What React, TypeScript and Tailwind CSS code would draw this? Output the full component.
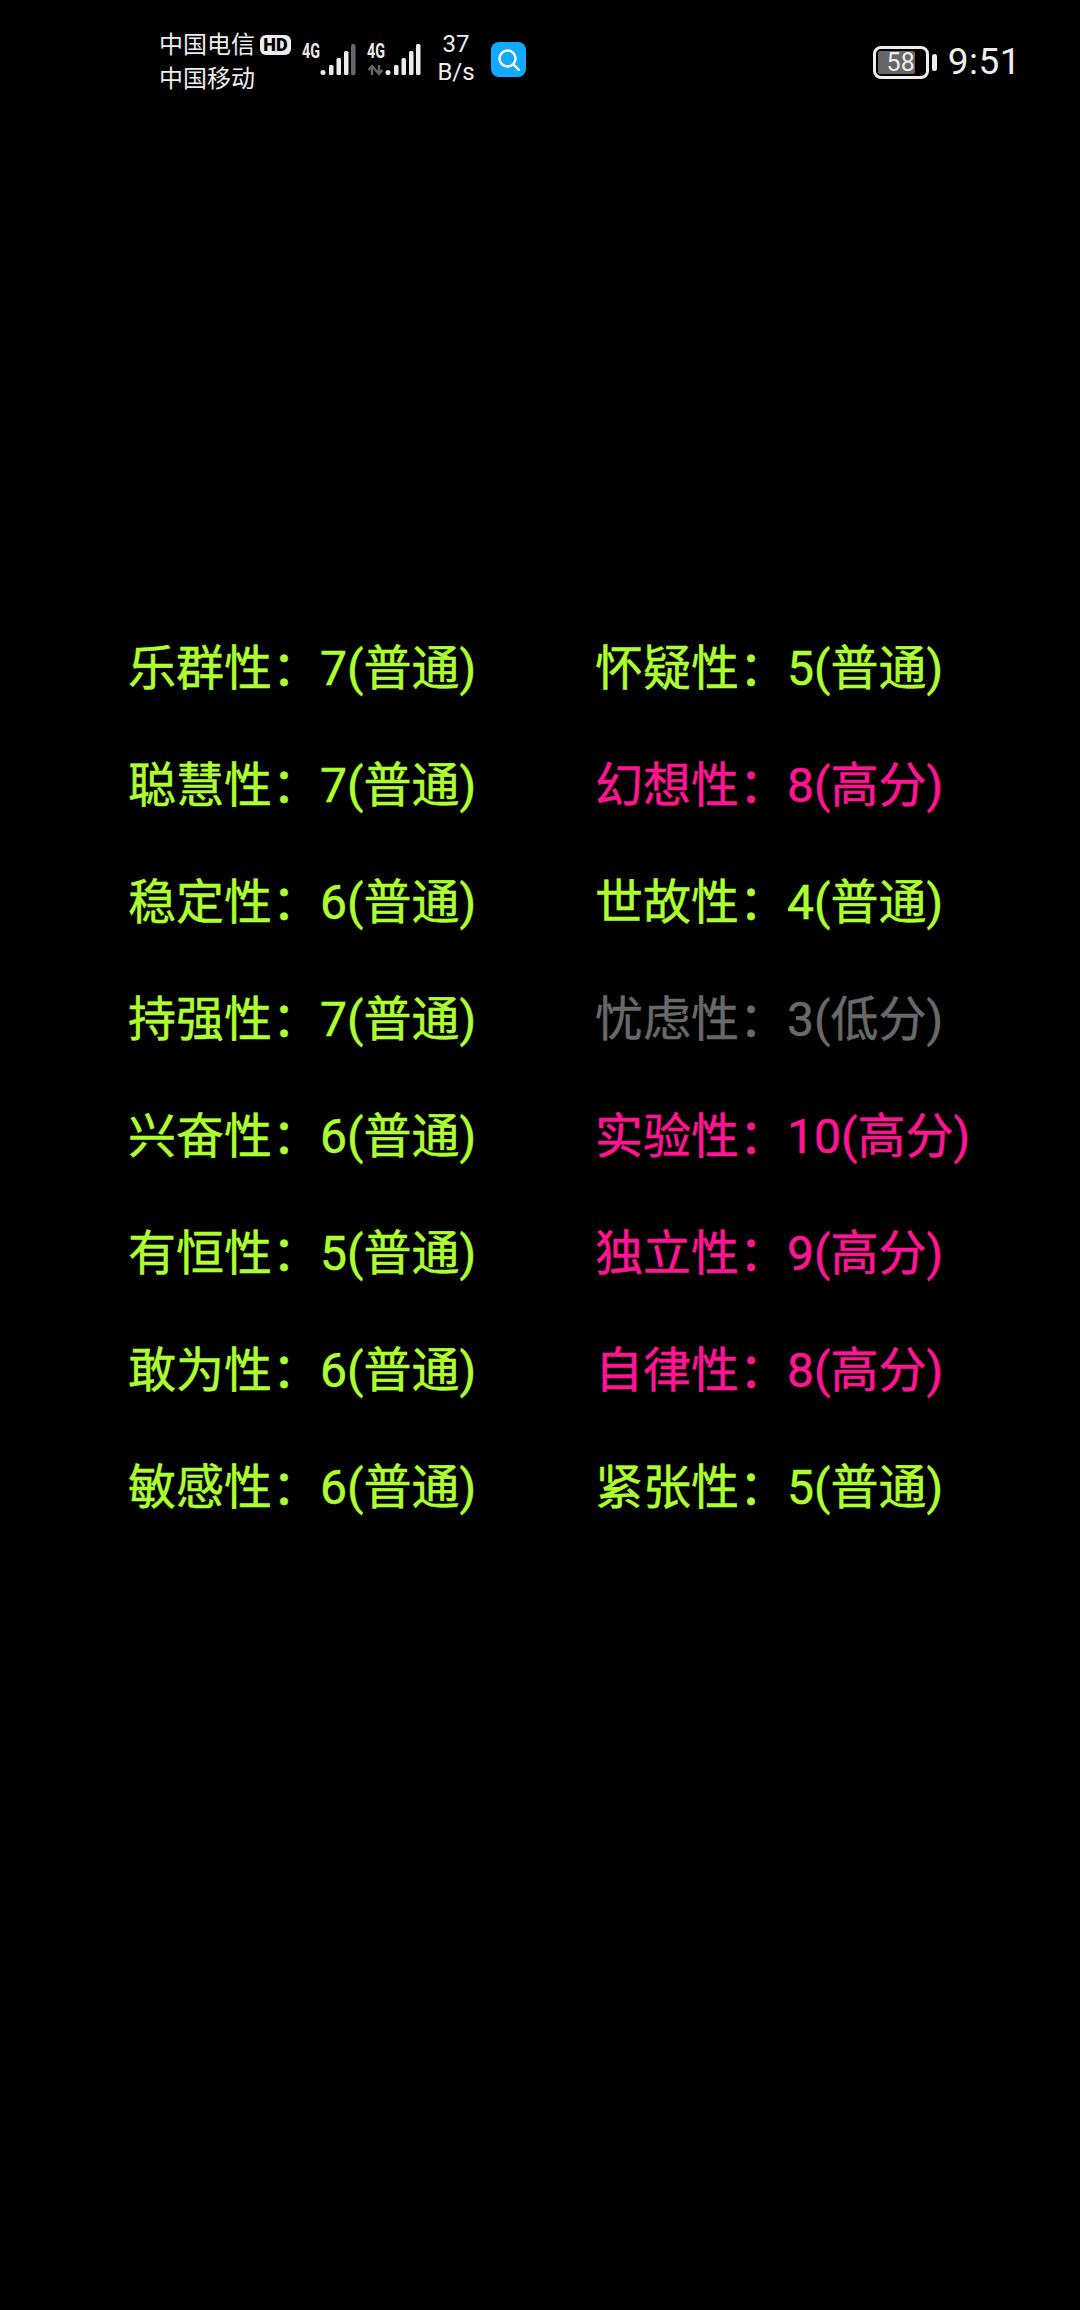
const G = "text-[#adff2f]";
const P = "text-[#ff1493]";
const D = "text-[#696969]";

const rows: [string, string, string][] = [
  ["乐群性\uff1a", "7(普通)", G],
  ["怀疑性\uff1a", "5(普通)", G],
  ["聪慧性\uff1a", "7(普通)", G],
  ["幻想性\uff1a", "8(高分)", P],
  ["稳定性\uff1a", "6(普通)", G],
  ["世故性\uff1a", "4(普通)", G],
  ["持强性\uff1a", "7(普通)", G],
  ["忧虑性\uff1a", "3(低分)", D],
  ["兴奋性\uff1a", "6(普通)", G],
  ["实验性\uff1a", "10(高分)", P],
  ["有恒性\uff1a", "5(普通)", G],
  ["独立性\uff1a", "9(高分)", P],
  ["敢为性\uff1a", "6(普通)", G],
  ["自律性\uff1a", "8(高分)", P],
  ["敏感性\uff1a", "6(普通)", G],
  ["紧张性\uff1a", "5(普通)", G],
];

function Signal({ last = "#ededed", arrows = false }: { last?: string; arrows?: boolean }) {
  return (
    <svg width="56" height="38" viewBox="0 -4 56 38" className="shrink-0">
      <text x="0" y="16" fontSize="20" fontWeight="700" fill="#ededed" fontFamily="'Roboto',sans-serif" textLength="18" lengthAdjust="spacingAndGlyphs">4G</text>
      {arrows && (
        <g fill="none" stroke="#666" strokeWidth="2.4">
          <path d="M5 33V24M1.5 28l3.5-4 3.5 4" />
          <path d="M12 23v9M8.5 28l3.5 4 3.5-4" />
        </g>
      )}
      <circle cx="21" cy="30.5" r="2.5" fill="#ededed" />
      <rect x="27" y="23" width="4.5" height="10" rx="1.5" fill="#ededed" />
      <rect x="34.5" y="16" width="4.5" height="17" rx="1.5" fill="#ededed" />
      <rect x="42" y="9" width="4.5" height="24" rx="1.5" fill="#ededed" />
      <rect x="49" y="2" width="4.5" height="31" rx="1.5" fill={last} />
    </svg>
  );
}

export default function App() {
  return (
    <div className="w-[1080px] h-[2310px] bg-black overflow-hidden font-['Roboto','Noto_Sans_CJK_SC',sans-serif]">
      <header className="h-[90px] flex items-start justify-between pl-[159px] pr-[59px] text-[#ededed]">
        <div className="flex items-start">
          <div className="w-[141px] pt-[28px] text-[24px] leading-[34px]">
            <div className="flex items-center">
              <span>中国电信</span>
              <span className="ml-[5px] w-[31px] h-[20px] rounded-[6px] bg-[#ededed] text-black text-[18px] leading-[20px] font-black text-center">HD</span>
            </div>
            <div>中国移动</div>
          </div>
          <div className="flex pt-[38px] ml-[2px] gap-[9px]">
            <Signal last="#666" />
            <Signal arrows />
          </div>
          <div className="w-[56px] ml-[5px] pt-[30px] text-[24px] leading-[28px] text-center">
            <div>37</div>
            <div>B/s</div>
          </div>
          <div className="ml-[7px] mt-[42px] w-[35px] h-[35px] rounded-[8px] bg-[#12aaff] flex items-center justify-center">
            <svg width="26" height="26" viewBox="0 0 26 26" fill="none" stroke="#fff" strokeWidth="2.4" strokeLinecap="round">
              <circle cx="11.5" cy="11.5" r="8" />
              <path d="M17.5 17.5L23 23" />
            </svg>
          </div>
        </div>
        <div className="flex items-center pt-[43px]">
          <div className="relative w-[56px] h-[33px] rounded-[8px] border-[3px] border-[#ededed] p-[2px]">
            <div className="h-full w-[37px] rounded-[2px] bg-[#666]" />
            <span className="absolute inset-0 flex items-center justify-center text-[25px] leading-none">58</span>
          </div>
          <div className="ml-[3px] w-[5px] h-[17px] rounded-full bg-[#ededed]" />
          <div className="ml-[11px] text-[37px] leading-[38px] tracking-[0.5px]">9:51</div>
        </div>
      </header>
      <main className="mt-[520px] ml-[128px] grid grid-cols-[467px_auto] auto-rows-[117px] text-[48px] leading-[117px] [-webkit-text-stroke:0.5px_currentColor]">
        {rows.map(([label, value, color]) => (
          <div key={label} className={`flex ${color}`}>
            <span className="w-[192px]">{label}</span>
            <span>{value}</span>
          </div>
        ))}
      </main>
    </div>
  );
}
